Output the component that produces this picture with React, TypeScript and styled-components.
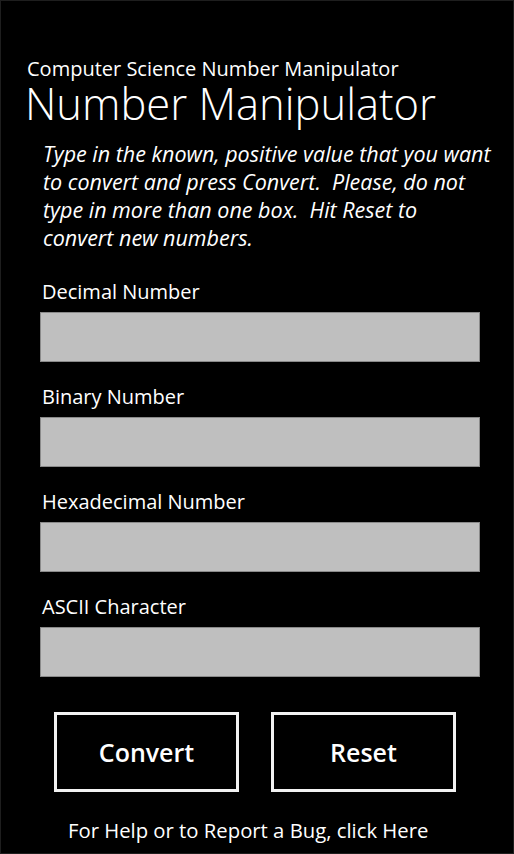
import React from 'react'
import styled, { createGlobalStyle } from 'styled-components'

const GlobalStyle = createGlobalStyle`
  html, body {
    margin: 0;
    padding: 0;
    background: #000;
  }
  body {
    font-family: 'Open Sans', 'Noto Sans', sans-serif;
    color: #fff;
  }
`

const Screen = styled.div`
  box-sizing: border-box;
  width: 514px;
  height: 854px;
  border: 1px solid #1e1e1e;
  background: #000;
  display: flex;
  flex-direction: column;
  padding-top: 56px;
  overflow: hidden;
`

const Header = styled.header`
  padding-left: 26px;
`

const AppName = styled.div`
  font-size: 20px;
  line-height: 24px;
`

const PageTitle = styled.h1`
  margin: 1px 0 0 -2px;
  font-size: 43.5px;
  font-weight: 300;
  line-height: 44px;
`

const Instructions = styled.p`
  margin: 14px 0 0 0;
  padding-left: 42px;
  font-size: 21.5px;
  font-style: italic;
  line-height: 28px;
  white-space: pre;
`

const Fields = styled.div`
  margin-top: 28px;
  padding: 0 33px 0 39px;
  display: flex;
  flex-direction: column;
  gap: 23px;
`

const Field = styled.label`
  display: flex;
  flex-direction: column;
  gap: 8px;
`

const FieldLabel = styled.span`
  padding-left: 2px;
  font-size: 20px;
  line-height: 24px;
`

const TextBox = styled.input`
  box-sizing: border-box;
  width: 100%;
  height: 50px;
  margin: 0;
  border: 1px solid #8a8a8a;
  background: #bfbfbf;
  outline: none;
  font-family: inherit;
  font-size: 20px;
`

const Buttons = styled.div`
  margin-top: 35px;
  padding-left: 53px;
  display: flex;
  gap: 32px;
`

const Button = styled.button`
  box-sizing: border-box;
  width: 185px;
  height: 80px;
  border: 3px solid #f2f2f2;
  background: #000;
  color: #fff;
  font-family: inherit;
  font-size: 25px;
  font-weight: 600;
  cursor: pointer;
`

const Footer = styled.a`
  margin-top: 26px;
  padding-left: 67px;
  color: #fff;
  text-decoration: none;
  font-size: 20.3px;
  line-height: 24px;
`

const fields = ['Decimal Number', 'Binary Number', 'Hexadecimal Number', 'ASCII Character']

export default function App() {
  return (
    <>
      <GlobalStyle />
      <Screen>
        <Header>
          <AppName>Computer Science Number Manipulator</AppName>
          <PageTitle>Number Manipulator</PageTitle>
        </Header>
        <Instructions>
          {'Type in the known, positive value that you want\nto convert and press Convert.  Please, do not\ntype in more than one box.  Hit Reset to\nconvert new numbers.'}
        </Instructions>
        <Fields>
          {fields.map(name => (
            <Field key={name}>
              <FieldLabel>{name}</FieldLabel>
              <TextBox type="text" />
            </Field>
          ))}
        </Fields>
        <Buttons>
          <Button>Convert</Button>
          <Button>Reset</Button>
        </Buttons>
        <Footer href="#">For Help or to Report a Bug, click Here</Footer>
      </Screen>
    </>
  )
}
